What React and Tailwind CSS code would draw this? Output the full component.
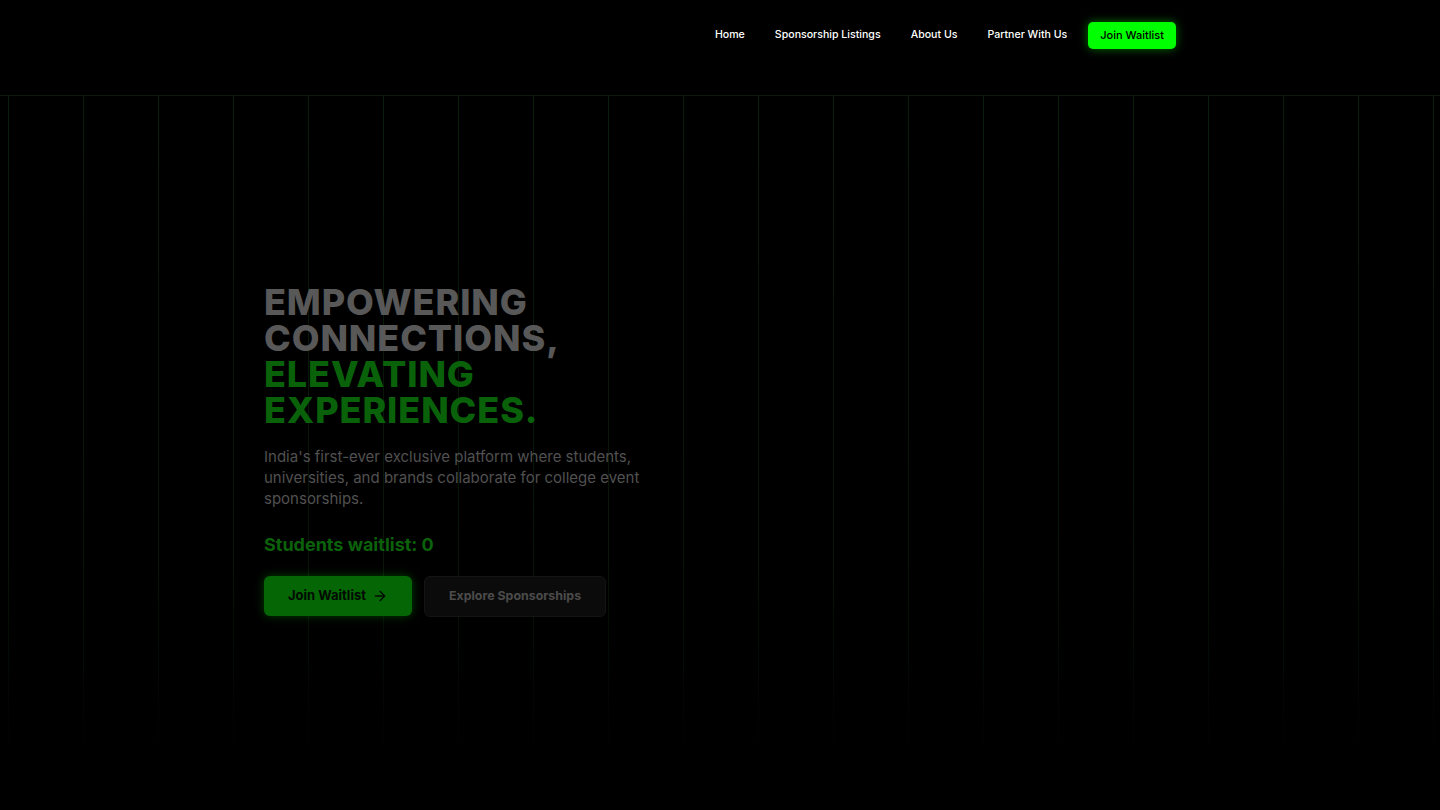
import React from 'react';
import { ArrowRight } from 'lucide-react';

const navLinks = ['Home', 'Sponsorship Listings', 'About Us', 'Partner With Us'];

// background beams, 75px apart
const beams = Array.from({ length: 20 }, (_, i) => i);

const Header = () => {
  return (
    <header className="h-24 border-b border-[#0c1a0c] bg-black">
      <div className="mx-auto flex h-[70px] w-[912px] items-center justify-end">
        <nav className="flex items-center gap-[30px]">
          {navLinks.map((link) => (
            <a key={link} className="text-[10.6px] font-medium text-white">
              {link}
            </a>
          ))}
        </nav>
        <button className="ml-[21px] h-[27px] rounded-[5px] bg-[#00ff00] px-3 text-[11px] font-medium text-black shadow-[0_0_10px_rgba(0,255,0,0.45)]">
          Join Waitlist
        </button>
      </div>
    </header>
  );
};

const Hero = () => {
  return (
    <section className="relative flex h-[714px] items-center overflow-hidden pb-[6px]">
      <div className="absolute inset-x-0 top-0 flex h-[660px] gap-[74px] pl-2">
        {beams.map((i) => (
          <div
            key={i}
            className="h-full w-px shrink-0 bg-gradient-to-b from-[#0a1c0a] via-[#081508] via-70% to-transparent"
          />
        ))}
      </div>

      <div className="relative mx-auto w-[912px]">
        <h1 className="text-[36px] font-extrabold uppercase leading-[36px] tracking-wide">
          <span className="block text-[#585858]">Empowering</span>
          <span className="block text-[#585858]">Connections,</span>
          <span className="block text-[#09620a]">Elevating</span>
          <span className="block text-[#09620a]">Experiences.</span>
        </h1>
        <p className="mt-[18px] max-w-[400px] text-[15px] leading-[21px] text-[#515151]">
          India's first-ever exclusive platform where students, universities, and brands collaborate for college event sponsorships.
        </p>
        <p className="mt-6 text-[18px] font-bold leading-6 text-[#0b620b]">Students waitlist: 0</p>
        <div className="mt-[19px] flex items-center gap-3">
          <button className="flex h-10 items-center gap-1.5 rounded-md bg-[#056605] px-6 text-[13px] font-bold text-[#030a03] shadow-[0_0_10px_rgba(0,160,0,0.4)]">
            Join Waitlist
            <ArrowRight size={16} strokeWidth={2} />
          </button>
          <button className="h-[41px] rounded-md border border-[#141414] bg-[#0b0b0b] px-6 text-[12.4px] font-bold text-[#4b4b4b]">
            Explore Sponsorships
          </button>
        </div>
      </div>
    </section>
  );
};

const App = () => {
  return (
    <div className="min-h-[810px] bg-black font-['Inter','Liberation_Sans',sans-serif]">
      <Header />
      <Hero />
    </div>
  );
};

export default App;
